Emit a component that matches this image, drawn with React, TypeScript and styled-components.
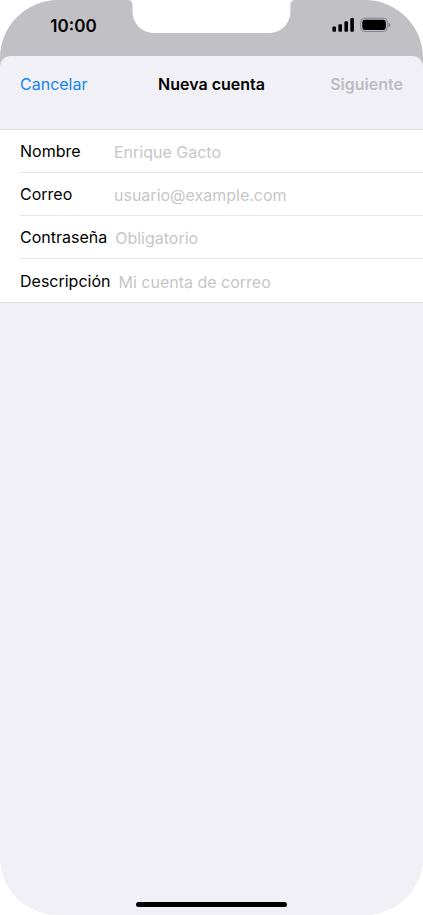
import React from "react";
import styled, { createGlobalStyle } from "styled-components";

const GlobalStyle = createGlobalStyle`
  *, *::before, *::after { box-sizing: border-box; }
  body {
    margin: 0;
    background: #ffffff;
    font-family: Inter, "Liberation Sans", sans-serif;
    font-size: 16px;
    line-height: 20px;
    color: #000000;
  }
`;

const Phone = styled.div`
  display: flex;
  flex-direction: column;
  min-height: 100vh;
  overflow: hidden;
  border-radius: 58px;
  background: linear-gradient(#c1c0c5 50%, #f1f0f6 50%);
`;

const StatusBar = styled.div`
  display: grid;
  grid-template-columns: 1fr 169px 1fr;
  height: 56px;
`;

const Time = styled.time`
  justify-self: center;
  padding: 16px 0 0 20px;
  font-size: 17px;
  font-weight: 600;
`;

const Notch = styled.svg`
  display: block;
  width: 169px;
  height: 33px;
`;

const Indicators = styled.div`
  display: flex;
  justify-content: flex-end;
  gap: 6px;
  padding: 17px 32px 0 0;
`;

const Sheet = styled.main`
  display: flex;
  flex: 1;
  flex-direction: column;
  border-radius: 10px 10px 0 0;
  background: #f1f0f6;
`;

const Form = styled.form`
  display: flex;
  flex-direction: column;
  gap: 17px;
`;

const Header = styled.header`
  display: grid;
  grid-template-columns: 1fr auto 1fr;
  align-items: center;
  height: 56px;
  padding: 0 20px;
`;

const Title = styled.h1`
  margin: 0;
  font-size: 16px;
  font-weight: 600;
`;

const Action = styled.button<{ $end?: boolean }>`
  justify-self: ${({ $end }) => ($end ? "end" : "start")};
  padding: 0;
  border: 0;
  background: none;
  color: #1584ec;
  font: inherit;
  font-weight: ${({ $end }) => ($end ? 600 : 400)};
  cursor: pointer;

  &:disabled {
    color: #bdbcc2;
    cursor: default;
  }
`;

const Fields = styled.div`
  border: solid #e3e2e6;
  border-width: 1px 0;
  background: #ffffff;
`;

const Row = styled.div`
  display: flex;
  align-items: center;
  gap: 8px;
  height: 43px;
  margin-left: 20px;

  &:not(:last-child) {
    border-bottom: 1px solid #e6e6e8;
  }
`;

const Label = styled.label`
  flex: none;
  min-width: 86px;
`;

const Input = styled.input`
  flex: 1;
  min-width: 0;
  padding: 2px 0 0;
  border: 0;
  outline: 0;
  background: none;
  color: inherit;
  font: inherit;

  &::placeholder {
    color: #c6c6c8;
    opacity: 1;
  }
`;

const HomeIndicator = styled.div`
  align-self: center;
  width: 151px;
  height: 5px;
  margin: auto 0 8px;
  border-radius: 3px;
  background: #000000;
`;

const fields = [
  { id: "nombre", label: "Nombre", type: "text", placeholder: "Enrique Gacto" },
  { id: "correo", label: "Correo", type: "email", placeholder: "usuario@example.com" },
  { id: "contrasena", label: "Contraseña", type: "password", placeholder: "Obligatorio" },
  { id: "descripcion", label: "Descripción", type: "text", placeholder: "Mi cuenta de correo" },
];

function SignalIcon() {
  return (
    <svg width="22" height="16" viewBox="0 0 22 16" aria-hidden="true">
      <rect x="0.4" y="9.4" width="3.6" height="5.400" rx="1.1" />
      <rect x="6.4" y="7.2" width="3.6" height="7.6" rx="1.1" />
      <rect x="12.4" y="4.2" width="3.6" height="10.6" rx="1.1" />
      <rect x="18.3" y="1.1" width="3.6" height="13.7" rx="1.1" />
    </svg>
  );
}

function BatteryIcon() {
  return (
    <svg width="31" height="16" viewBox="0 0 31 16" aria-hidden="true">
      <rect x="0.8" y="1.2" width="26.5" height="13.3" rx="4" fill="none" stroke="#858488" />
      <rect x="2.3" y="2.8" width="23.5" height="10.2" rx="2.4" />
      <path d="M28.7 5.4c2.1 1 2.1 4 0 5z" fill="#77767a" />
    </svg>
  );
}

export default function App() {
  return (
    <>
      <GlobalStyle />
      <Phone>
        <StatusBar>
          <Time>10:00</Time>
          <Notch viewBox="0 0 169 33" aria-hidden="true">
            <path d="M0 0c4 0 5.500 1.500 5.500 5v5.500c0 13 9 22.500 22 22.500h114c13 0 22-9.500 22-22.500V5c0-3.500 1.500-5 5.500-5z" fill="#ffffff" />
          </Notch>
          <Indicators>
            <SignalIcon />
            <BatteryIcon />
          </Indicators>
        </StatusBar>
        <Sheet>
          <Form onSubmit={(event) => event.preventDefault()}>
            <Header>
              <Action type="button">Cancelar</Action>
              <Title>Nueva cuenta</Title>
              <Action type="submit" $end disabled>
                Siguiente
              </Action>
            </Header>
            <Fields>
              {fields.map(({ id, label, type, placeholder }) => (
                <Row key={id}>
                  <Label htmlFor={id}>{label}</Label>
                  <Input id={id} type={type} placeholder={placeholder} />
                </Row>
              ))}
            </Fields>
          </Form>
          <HomeIndicator />
        </Sheet>
      </Phone>
    </>
  );
}
